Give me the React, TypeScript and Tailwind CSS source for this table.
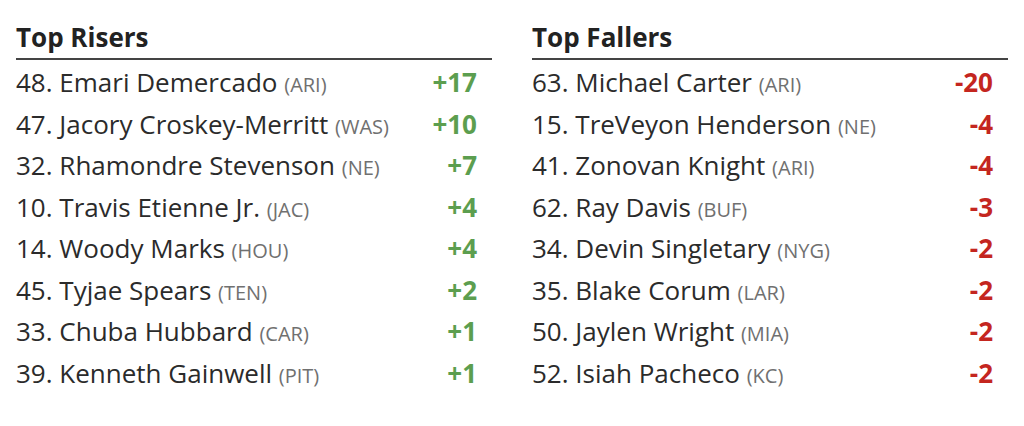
import React from 'react';

type Row = { rank: number; name: string; team: string; change: number };

const risers: Row[] = [
  { rank: 48, name: 'Emari Demercado', team: 'ARI', change: 17 },
  { rank: 47, name: 'Jacory Croskey-Merritt', team: 'WAS', change: 10 },
  { rank: 32, name: 'Rhamondre Stevenson', team: 'NE', change: 7 },
  { rank: 10, name: 'Travis Etienne Jr.', team: 'JAC', change: 4 },
  { rank: 14, name: 'Woody Marks', team: 'HOU', change: 4 },
  { rank: 45, name: 'Tyjae Spears', team: 'TEN', change: 2 },
  { rank: 33, name: 'Chuba Hubbard', team: 'CAR', change: 1 },
  { rank: 39, name: 'Kenneth Gainwell', team: 'PIT', change: 1 },
];

const fallers: Row[] = [
  { rank: 63, name: 'Michael Carter', team: 'ARI', change: -20 },
  { rank: 15, name: 'TreVeyon Henderson', team: 'NE', change: -4 },
  { rank: 41, name: 'Zonovan Knight', team: 'ARI', change: -4 },
  { rank: 62, name: 'Ray Davis', team: 'BUF', change: -3 },
  { rank: 34, name: 'Devin Singletary', team: 'NYG', change: -2 },
  { rank: 35, name: 'Blake Corum', team: 'LAR', change: -2 },
  { rank: 50, name: 'Jaylen Wright', team: 'MIA', change: -2 },
  { rank: 52, name: 'Isiah Pacheco', team: 'KC', change: -2 },
];

function MoverList({ title, rows }: { title: string; rows: Row[] }) {
  return (
    <div className="w-[476px]">
      <h2 className="border-b-2 border-[#444] pb-[5px] text-[26px] leading-8 font-bold text-[#222]">{title}</h2>
      <ul className="mt-[2px]">
        {rows.map((r) => (
          <li key={r.rank} className="flex h-[41.5px] items-baseline justify-between pr-[15px] text-[26px] leading-[41.5px]">
            <span className="text-[#2b2b2b]">
              {r.rank}. {r.name} <span className="text-[20px] leading-none text-[#707070]">({r.team})</span>
            </span>
            <span className={r.change > 0 ? 'font-bold text-[#5c9e4f]' : 'font-bold text-[#c4261f]'}>
              {r.change > 0 ? `+${r.change}` : r.change}
            </span>
          </li>
        ))}
      </ul>
    </div>
  );
}

export default function App() {
  return (
    <div className="h-[426px] w-[1024px] bg-white px-4 pt-[21px] font-['Open_Sans',sans-serif]">
      <div className="flex gap-10">
        <MoverList title="Top Risers" rows={risers} />
        <MoverList title="Top Fallers" rows={fallers} />
      </div>
    </div>
  );
}
